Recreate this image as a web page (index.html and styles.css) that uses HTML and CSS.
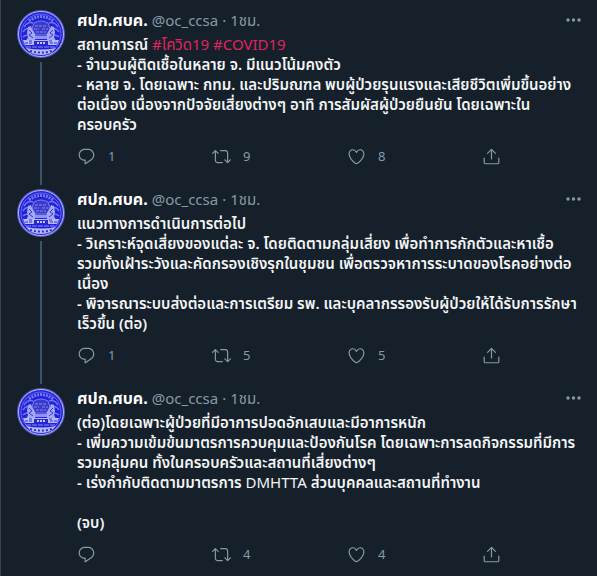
FILE: index.html
```html
<!DOCTYPE html>
<html lang="th">
<head>
    <meta charset="UTF-8">
    <meta name="viewport" content="width=device-width, initial-scale=1.0">
    <title>ศปก.ศบค.</title>
    <link rel="stylesheet" href="styles.css">
</head>
<body>
    <!-- shared icons -->
    <svg class="defs" width="0" height="0" aria-hidden="true">
        <symbol id="reply" viewBox="0 0 24 24">
            <path d="M14.046 2.242l-4.148-.01h-.002c-4.374 0-7.8 3.427-7.8 7.802 0 4.098 3.186 7.206 7.465 7.37v3.828c0 .108.044.286.12.403.142.225.384.347.632.347.138 0 .277-.038.402-.118.264-.168 6.473-4.14 8.088-5.506 1.902-1.61 3.04-3.97 3.043-6.312v-.017c-.006-4.367-3.43-7.787-7.8-7.788zm3.787 12.972c-1.134.96-4.862 3.405-6.772 4.643V16.67c0-.414-.335-.75-.75-.75h-.396c-3.66 0-6.318-2.476-6.318-5.886 0-3.534 2.768-6.302 6.3-6.302l4.147.01h.002c3.532 0 6.3 2.766 6.302 6.296-.003 1.91-.942 3.844-2.514 5.176z"/>
        </symbol>
        <symbol id="retweet" viewBox="0 0 24 24">
            <path d="M23.77 15.67c-.292-.293-.767-.293-1.06 0l-2.22 2.22V7.65c0-2.068-1.683-3.75-3.75-3.75h-5.85c-.414 0-.75.336-.75.75s.336.75.75.75h5.85c1.24 0 2.25 1.01 2.25 2.25v10.24l-2.22-2.22c-.293-.293-.768-.293-1.06 0s-.294.768 0 1.06l3.5 3.5c.145.147.337.22.53.22s.383-.072.53-.22l3.5-3.5c.294-.292.294-.767 0-1.06zm-10.66 3.28H7.26c-1.24 0-2.25-1.01-2.25-2.25V6.46l2.22 2.22c.148.147.34.22.532.22s.384-.073.53-.22c.293-.293.293-.768 0-1.06l-3.5-3.5c-.293-.294-.768-.294-1.06 0l-3.5 3.5c-.294.292-.294.767 0 1.06s.767.293 1.06 0l2.22-2.22V16.7c0 2.068 1.683 3.75 3.75 3.75h5.85c.414 0 .75-.336.75-.75s-.337-.75-.75-.75z"/>
        </symbol>
        <symbol id="like" viewBox="0 0 24 24">
            <path d="M12 21.638h-.014C9.403 21.59 1.95 14.856 1.95 8.478c0-3.064 2.525-5.754 5.403-5.754 2.29 0 3.83 1.58 4.646 2.73.814-1.148 2.354-2.73 4.645-2.73 2.88 0 5.404 2.69 5.404 5.755 0 6.376-7.454 13.11-10.037 13.157H12zM7.354 4.225c-2.08 0-3.903 1.988-3.903 4.255 0 5.74 7.034 11.596 8.55 11.658 1.518-.062 8.55-5.917 8.55-11.658 0-2.267-1.823-4.255-3.903-4.255-2.528 0-3.94 2.936-3.952 2.965-.23.562-1.156.562-1.387 0-.014-.03-1.425-2.965-3.954-2.965z"/>
        </symbol>
        <symbol id="share" viewBox="0 0 24 24">
            <path d="M17.53 7.47l-5-5c-.293-.293-.768-.293-1.06 0l-5 5c-.294.293-.294.768 0 1.06s.767.294 1.06 0l3.72-3.72V15c0 .414.336.75.75.75s.75-.336.75-.75V4.81l3.72 3.72c.146.147.338.22.53.22s.384-.072.53-.22c.293-.293.293-.767 0-1.06z"/>
            <path d="M19.708 21.944H4.292C3.028 21.944 2 20.916 2 19.652V14c0-.414.336-.75.75-.75s.75.336.75.75v5.652c0 .437.355.792.792.792h15.416c.437 0 .792-.355.792-.792V14c0-.414.336-.75.75-.75s.75.336.75.75v5.652c0 1.264-1.028 2.292-2.292 2.292z"/>
        </symbol>
        <symbol id="more" viewBox="0 0 16 16">
            <circle cx="3" cy="8" r="1.7"/>
            <circle cx="8.5" cy="8" r="1.7"/>
            <circle cx="14" cy="8" r="1.7"/>
        </symbol>
        <symbol id="seal" viewBox="0 0 48 48">
            <circle cx="24" cy="24" r="24" fill="#5a5cc0"/>
            <circle cx="24" cy="24" r="22.5" fill="#2222dc" stroke="#b4b6f4" stroke-width="1"/>
            <circle cx="24" cy="24" r="20" fill="none" stroke="#6468ea" stroke-width="1"/>
            <path d="M12 11q12-9 24 0" fill="none" stroke="#7377ec" stroke-width="3" stroke-dasharray="2 1"/>
            <path d="M7 17q4-6 9-4M41 17q-4-6-9-4M6 22q3-5 7-3M42 22q-3-5-7-3M6 27q3-3 6-1M42 27q-3-3-6-1" fill="none" stroke="#7276ee" stroke-width="1.5"/>
            <path d="M17 13q7-4 14 0l2 6-3 6H18l-3-6z" fill="#3a3acb" stroke="#7c80ee" stroke-width="1"/>
            <path d="M18 16h12M17 19h5m3 0h6M19 22h10" stroke="#8588f0" stroke-width="1" stroke-dasharray="3 1"/>
            <path d="M11 17l3-1 1 3 3 5 1 4-2 3H9l2-4-1-4zM37 17l-3-1-1 3-3 5-1 4 2 3h8l-2-4 1-4z" fill="#a4a7f6"/>
            <path d="M12 20l3 3-3 2 4 3M36 20l-3 3 3 2-4 3" fill="none" stroke="#3636d4" stroke-width="1"/>
            <path d="M18 26h12v3H18z" fill="#9093f2"/>
            <path d="M6 30h36l-2 5H8z" fill="#b6b9fa"/>
            <path d="M17 31h14v4H17z" fill="#2a2ac8"/>
            <path d="M20 33h8" stroke="#c4c6fc" stroke-width="2" stroke-dasharray="2 1"/>
            <path d="M8 33h7M33 33h7M12 31h4M32 31h4" stroke="#3434d2" stroke-width="1" stroke-dasharray="3 1"/>
            <path d="M9 37h30" stroke="#8a8df0" stroke-width="1" stroke-dasharray="5 1"/>
            <path d="M9 38q15 3 30 0l-5 5q-10 4-20 0z" fill="#b9bbf8"/>
            <path d="M13 41q11 3 22 0" fill="none" stroke="#2a2ad0" stroke-width="2" stroke-dasharray="2 2"/>
        </symbol>
    </svg>

    <main class="thread">
        <article class="tweet">
            <div class="side">
                <svg class="avatar" role="img" aria-label="ศปก.ศบค."><use href="#seal"/></svg>
            </div>
            <div class="content">
                <header class="head">
                    <a class="name" href="#">ศปก.ศบค.</a>
                    <a class="meta" href="#">@oc_ccsa</a>
                    <span class="meta">·</span>
                    <a class="meta" href="#">1ชม.</a>
                    <button class="more" aria-label="เพิ่มเติม"><svg><use href="#more"/></svg></button>
                </header>
                <p class="text">สถานการณ์ <a href="#">#โควิด19</a> <a href="#">#COVID19</a><br>
                - จำนวนผู้ติดเชื้อในหลาย จ. มีแนวโน้มคงตัว<br>
                - หลาย จ. โดยเฉพาะ กทม. และปริมณฑล พบผู้ป่วยรุนแรงและเสียชีวิตเพิ่มขึ้นอย่าง<br>
                ต่อเนื่อง เนื่องจากปัจจัยเสี่ยงต่างๆ อาทิ การสัมผัสผู้ป่วยยืนยัน โดยเฉพาะใน<br>
                ครอบครัว</p>
                <div class="actions">
                    <button aria-label="ตอบกลับ"><svg><use href="#reply"/></svg><span>1</span></button>
                    <button aria-label="รีทวีต"><svg><use href="#retweet"/></svg><span>9</span></button>
                    <button aria-label="ถูกใจ"><svg><use href="#like"/></svg><span>8</span></button>
                    <button aria-label="แชร์"><svg><use href="#share"/></svg></button>
                </div>
            </div>
        </article>

        <article class="tweet">
            <div class="side">
                <svg class="avatar" role="img" aria-label="ศปก.ศบค."><use href="#seal"/></svg>
            </div>
            <div class="content">
                <header class="head">
                    <a class="name" href="#">ศปก.ศบค.</a>
                    <a class="meta" href="#">@oc_ccsa</a>
                    <span class="meta">·</span>
                    <a class="meta" href="#">1ชม.</a>
                    <button class="more" aria-label="เพิ่มเติม"><svg><use href="#more"/></svg></button>
                </header>
                <p class="text">แนวทางการดำเนินการต่อไป<br>
                - วิเคราะห์จุดเสี่ยงของแต่ละ จ. โดยติดตามกลุ่มเสี่ยง เพื่อทำการกักตัวและหาเชื้อ<br>
                รวมทั้งเฝ้าระวังและคัดกรองเชิงรุกในชุมชน เพื่อตรวจหาการระบาดของโรคอย่างต่อ<br>
                เนื่อง<br>
                - พิจารณาระบบส่งต่อและการเตรียม รพ. และบุคลากรรองรับผู้ป่วยให้ได้รับการรักษา<br>
                เร็วขึ้น (ต่อ)</p>
                <div class="actions">
                    <button aria-label="ตอบกลับ"><svg><use href="#reply"/></svg><span>1</span></button>
                    <button aria-label="รีทวีต"><svg><use href="#retweet"/></svg><span>5</span></button>
                    <button aria-label="ถูกใจ"><svg><use href="#like"/></svg><span>5</span></button>
                    <button aria-label="แชร์"><svg><use href="#share"/></svg></button>
                </div>
            </div>
        </article>

        <article class="tweet">
            <div class="side">
                <svg class="avatar" role="img" aria-label="ศปก.ศบค."><use href="#seal"/></svg>
            </div>
            <div class="content">
                <header class="head">
                    <a class="name" href="#">ศปก.ศบค.</a>
                    <a class="meta" href="#">@oc_ccsa</a>
                    <span class="meta">·</span>
                    <a class="meta" href="#">1ชม.</a>
                    <button class="more" aria-label="เพิ่มเติม"><svg><use href="#more"/></svg></button>
                </header>
                <p class="text">(ต่อ)โดยเฉพาะผู้ป่วยที่มีอาการปอดอักเสบและมีอาการหนัก<br>
                - เพิ่มความเข้มข้นมาตรการควบคุมและป้องกันโรค โดยเฉพาะการลดกิจกรรมที่มีการ<br>
                รวมกลุ่มคน ทั้งในครอบครัวและสถานที่เสี่ยงต่างๆ<br>
                - เร่งกำกับติดตามมาตรการ <span class="latin">DMHTTA</span> ส่วนบุคคลและสถานที่ทำงาน<br>
                <br>
                (จบ)</p>
                <div class="actions">
                    <button aria-label="ตอบกลับ"><svg><use href="#reply"/></svg></button>
                    <button aria-label="รีทวีต"><svg><use href="#retweet"/></svg><span>4</span></button>
                    <button aria-label="ถูกใจ"><svg><use href="#like"/></svg><span>4</span></button>
                    <button aria-label="แชร์"><svg><use href="#share"/></svg></button>
                </div>
            </div>
        </article>
    </main>
</body>
</html>
```
FILE: styles.css
```css
* {
    box-sizing: border-box;
}
body {
    margin: 0;
    background-color: #15202b;
    color: #f2f4f5;
    font-family: "Noto Sans", "Noto Sans Thai", "Noto Sans Thai Looped", sans-serif;
    font-size: 15px;
    line-height: 20px;
}
a {
    text-decoration: none;
}
button {
    display: flex;
    align-items: center;
    padding: 0;
    border: 0;
    background: none;
    color: #8899a6;
    font: inherit;
    cursor: pointer;
}
svg {
    display: block;
    fill: currentColor;
}
.defs {
    position: absolute;
}
.thread {
    min-height: 100vh;
    padding: 6px 16px 0;
    border-left: 1px solid #38444d;
}
.tweet {
    display: flex;
    gap: 12px;
}
.side {
    display: flex;
    flex: none;
    flex-direction: column;
    align-items: center;
    gap: 4px;
    padding-top: 4px;
}
.tweet:not(:last-child) .side::after {
    content: "";
    flex: 1;
    width: 2px;
    background-color: #3d5466;
}
.avatar {
    width: 48px;
    height: 48px;
}
.content {
    flex: 1;
    min-width: 0;
    padding: 4px 0 19px;
}
.head {
    display: flex;
    gap: 4px;
    height: 20px;
    margin-bottom: 4px;
}
.name {
    color: #fff;
    font-size: 16px;
    font-weight: bold;
}
.meta {
    color: #8899a6;
}
.more {
    margin-left: auto;
}
.more svg {
    width: 16px;
    height: 16px;
}
.text {
    margin: 0;
    font-weight: 600;
    white-space: nowrap;
}
.text a {
    color: #e0245e;
    font-weight: 400;
}
.latin {
    font-weight: 400;
}
.actions {
    display: grid;
    grid-template-columns: 15fr 15fr 15fr 11fr;
    margin-top: 12px;
    font-size: 13px;
}
.actions svg {
    width: 19px;
    height: 19px;
}
.actions span {
    padding-left: 12px;
}
```
